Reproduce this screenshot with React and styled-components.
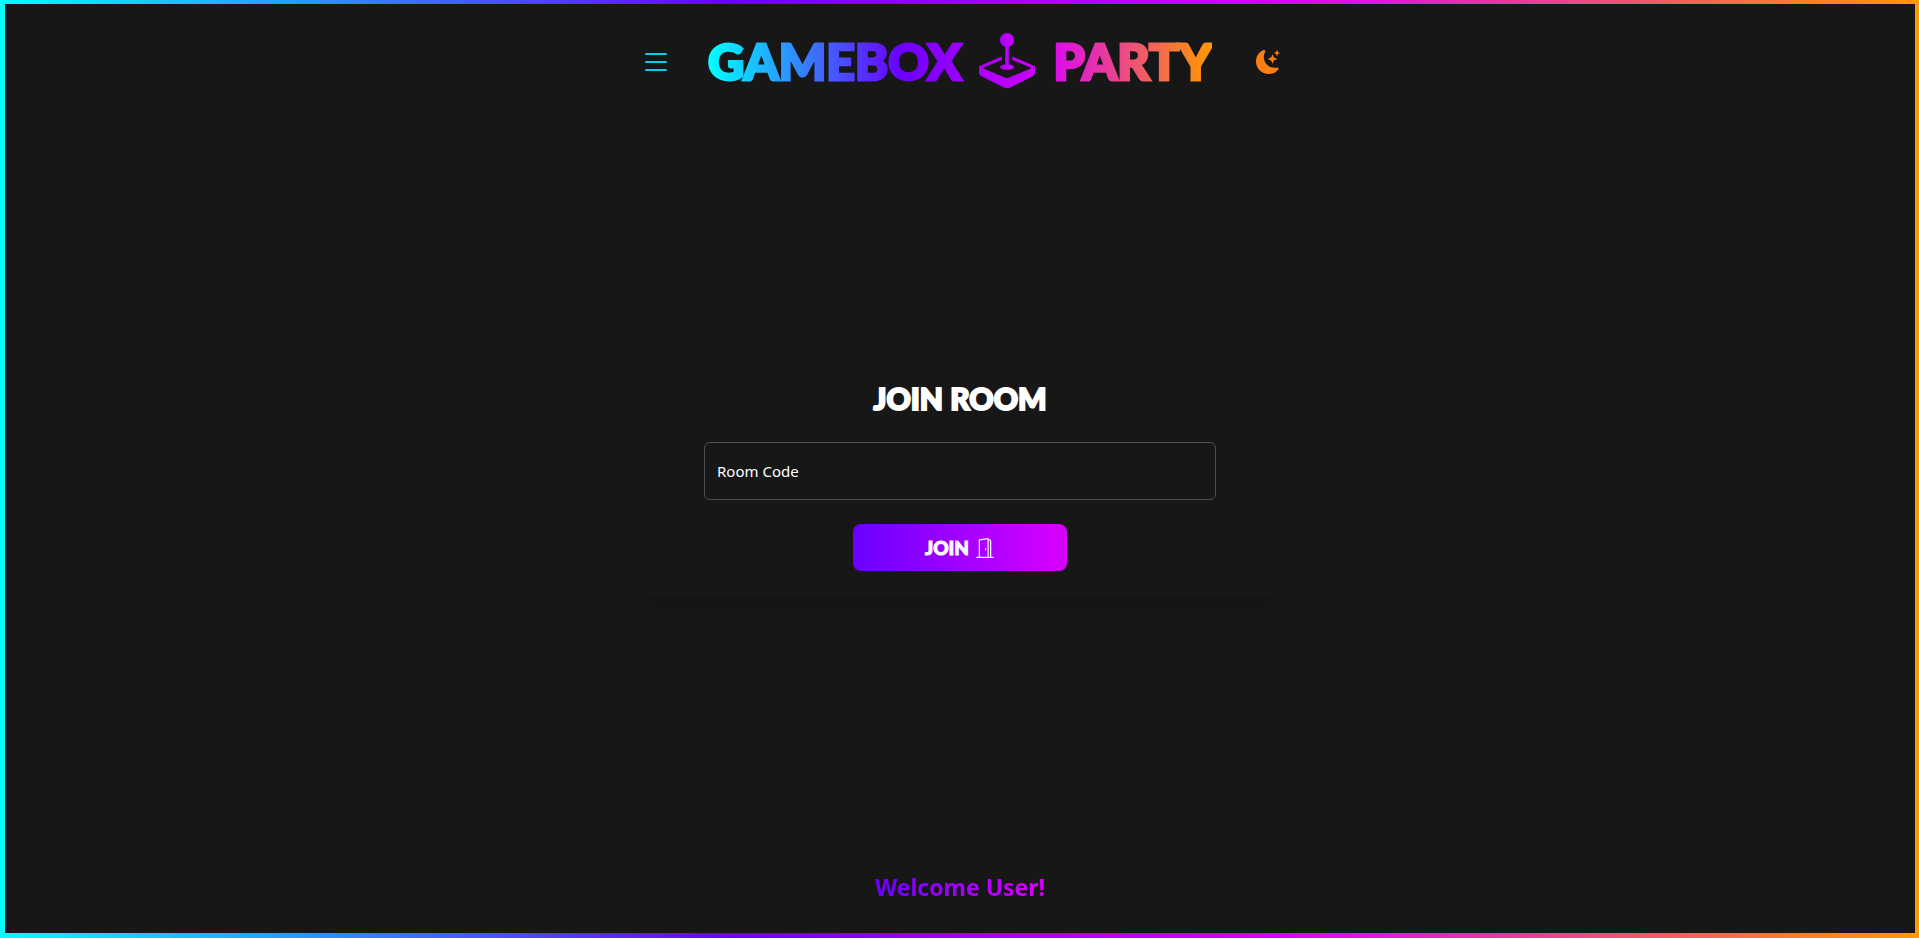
import React from "react";
import styled, { createGlobalStyle } from "styled-components";
import { BsDoorOpen, BsJoystick, BsList, BsMoonStarsFill } from "react-icons/bs";

const rainbow =
  "linear-gradient(90deg, #00ffff 0%, #6a00ff 38%, #d900ff 66%, #ff9900 100%)";
const violet = "linear-gradient(90deg, #6a00ff, #d900ff)";
const display = '"Lato", "Open Sans", sans-serif';

const GlobalStyle = createGlobalStyle`
  *, *::before, *::after { box-sizing: border-box; }
  body {
    margin: 0;
    background: #171717;
    color: #fff;
    font-family: "Noto Sans", "Open Sans", sans-serif;
    font-size: 15px;
  }
`;

const Frame = styled.div`
  display: flex;
  min-height: 100vh;
  padding: 4px 4px 5px 5px;
  background: ${rainbow};
`;

const Page = styled.div`
  flex: 1;
  display: grid;
  grid-template-rows: 1fr auto 1fr;
  justify-items: center;
  background: #171717;
`;

const Header = styled.header`
  display: flex;
  align-items: center;
  justify-content: space-between;
  align-self: start;
  width: 33.5%;
  min-width: 640px;
  padding-top: 28px;
`;

const IconButton = styled.button`
  display: flex;
  justify-content: flex-end;
  width: 32px;
  padding: 2px 0 0;
  border: 0;
  background: none;
  color: ${(p) => p.$color};
  font-size: ${(p) => p.$size}px;
  cursor: pointer;
`;

const Logo = styled.h1`
  display: flex;
  align-items: center;
  gap: 18px;
  margin: 0;
  background: ${rainbow};
  background-clip: text;
  -webkit-background-clip: text;
  color: transparent;
  font: 900 50px/58px ${display};
  -webkit-text-stroke: 3px transparent;
`;

const LogoIcon = styled(BsJoystick)`
  width: 56px;
  height: 56px;
  fill: url(#joystick);
`;

const Defs = styled.svg`
  position: absolute;
  width: 0;
  height: 0;
`;

const Card = styled.form`
  display: flex;
  flex-direction: column;
  align-items: center;
  gap: 24px;
  width: 33.5%;
  min-width: 640px;
  margin-top: 14px;
  padding: 24px 64px;
  border-radius: 10px;
  box-shadow: 0 8px 16px rgba(0, 0, 0, 0.15);
`;

const Title = styled.h2`
  margin: 0;
  padding-bottom: 2px;
  font: 900 30px/36px ${display};
  -webkit-text-stroke: 2px currentColor;
`;

const Field = styled.div`
  display: grid;
  align-items: center;
  width: 100%;
`;

const Input = styled.input`
  grid-area: 1 / 1;
  width: 100%;
  height: 58px;
  padding: 0 12px;
  border: 1px solid #495057;
  border-radius: 6px;
  background: #171717;
  color: #fff;
  font: inherit;
`;

const Label = styled.label`
  grid-area: 1 / 1;
  justify-self: start;
  padding-left: 13px;
  pointer-events: none;

  ${Input}:not(:placeholder-shown) + & {
    visibility: hidden;
  }
`;

const JoinButton = styled.button`
  display: flex;
  align-items: center;
  justify-content: center;
  gap: 6px;
  width: 214px;
  height: 47px;
  padding: 0;
  border: 0;
  border-radius: 8px;
  background: ${violet};
  color: #f8f9fa;
  font: 900 19px/24px ${display};
  -webkit-text-stroke: 1px currentColor;
  cursor: pointer;

  svg {
    width: 20px;
    height: 20px;
  }
`;

const Footer = styled.footer`
  align-self: end;
  padding-bottom: 28px;
`;

const Welcome = styled.p`
  margin: 0;
  background: ${violet};
  background-clip: text;
  -webkit-background-clip: text;
  color: transparent;
  font-size: 23px;
  font-weight: 700;
  line-height: 36px;
`;

export default function App() {
  return (
    <Frame>
      <GlobalStyle />
      <Defs aria-hidden="true">
        <linearGradient id="joystick">
          <stop offset="0" stopColor="#ab00ff" />
          <stop offset="1" stopColor="#cb00ff" />
        </linearGradient>
      </Defs>
      <Page>
        <Header>
          <IconButton $color="#0dcaf0" $size={32} aria-label="Menu">
            <BsList />
          </IconButton>
          <Logo>
            <span>GAMEBOX</span>
            <LogoIcon />
            <span>PARTY</span>
          </Logo>
          <IconButton $color="#fd7e14" $size={24} aria-label="Dark mode">
            <BsMoonStarsFill />
          </IconButton>
        </Header>
        <Card onSubmit={(e) => e.preventDefault()}>
          <Title>JOIN ROOM</Title>
          <Field>
            <Input id="room-code" placeholder=" " autoComplete="off" />
            <Label htmlFor="room-code">Room Code</Label>
          </Field>
          <JoinButton type="submit">
            JOIN <BsDoorOpen />
          </JoinButton>
        </Card>
        <Footer>
          <Welcome>Welcome User!</Welcome>
        </Footer>
      </Page>
    </Frame>
  );
}
